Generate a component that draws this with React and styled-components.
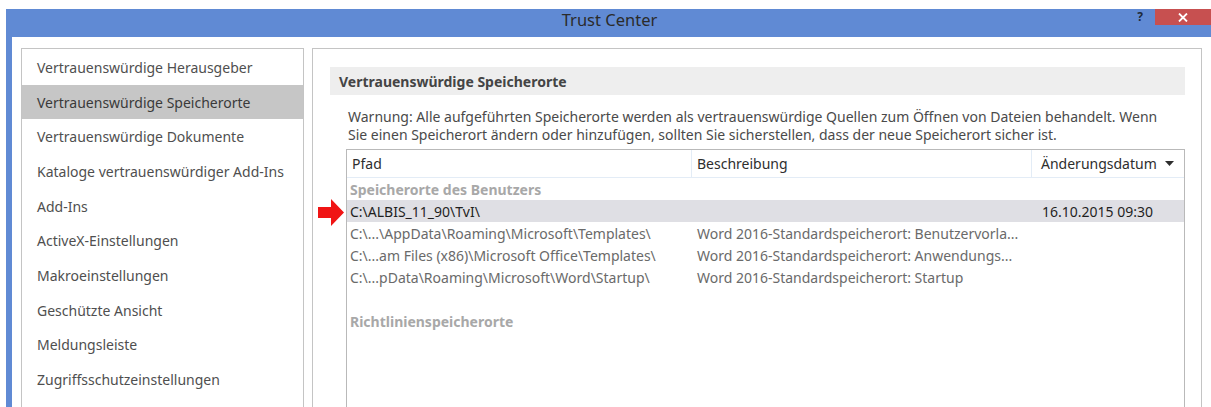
import React from 'react';
import styled, { createGlobalStyle } from 'styled-components';

const GlobalStyle = createGlobalStyle`
  html, body {
    margin: 0;
    padding: 0;
    background: #ffffff;
    overflow: hidden;
  }
  body {
    font-family: 'Noto Sans', 'Liberation Sans', sans-serif;
    font-size: 14px;
    color: #444;
  }
`;

const Window = styled.div`
  margin: 9px 0 0 6px;
  height: 398px;
  background: #608ad4;
  display: flex;
  flex-direction: column;
  overflow: hidden;
`;

const TitleBar = styled.div`
  height: 28px;
  flex-shrink: 0;
  position: relative;
  display: flex;
  align-items: center;
  justify-content: center;
`;

const Title = styled.div`
  font-size: 16.5px;
  color: #2b2b2b;
  margin-top: -8px;
  margin-left: 2px;
`;

const WindowButtons = styled.div`
  position: absolute;
  top: 0;
  right: 0;
  display: flex;
  align-items: flex-start;
`;

const HelpButton = styled.div`
  width: 30px;
  height: 16px;
  font-size: 12px;
  font-weight: 700;
  color: #1e2a3a;
  display: flex;
  align-items: center;
  justify-content: center;
  line-height: 1;
`;

const CloseButton = styled.div`
  width: 56px;
  height: 16px;
  background: #c75050;
  display: flex;
  align-items: center;
  justify-content: center;
`;

const Body = styled.div`
  flex: 1;
  background: #ffffff;
  margin-left: 6px;
  padding: 11px 0 0 9px;
  display: flex;
  gap: 8px;
  min-height: 0;
`;

const NavPanel = styled.ul`
  list-style: none;
  margin: 0;
  padding: 1px 0 0;
  width: 281px;
  flex-shrink: 0;
  border: 1px solid #c4c4c4;
  border-bottom: none;
`;

const NavItem = styled.li`
  height: 34.7px;
  display: flex;
  align-items: center;
  padding-left: 15px;
  color: ${p => (p.$active ? '#3a3a3a' : '#4f4f4f')};
  background: ${p => (p.$active ? '#c6c6c6' : 'transparent')};
  white-space: nowrap;
`;

const ContentPanel = styled.div`
  width: 890px;
  flex-shrink: 0;
  border: 1px solid #c4c4c4;
  border-bottom: none;
  padding: 18px 16px 0 17px;
  display: flex;
  flex-direction: column;
  box-sizing: border-box;
`;

const SectionHeader = styled.div`
  height: 28px;
  background: #eeeeee;
  display: flex;
  align-items: center;
  padding-left: 9px;
  font-weight: 700;
  color: #444;
`;

const Warning = styled.p`
  margin: 13px 22px 6px 18px;
  line-height: 17.5px;
  color: #4a4a4a;
`;

const TableWrap = styled.div`
  position: relative;
  margin-left: 16px;
  flex: 1;
  border: 1px solid #b9b9b9;
  border-bottom: none;
`;

const Grid = styled.div`
  display: grid;
  grid-template-columns: 345px 340px 1fr;
`;

const HeaderCell = styled.div`
  height: 27px;
  display: flex;
  align-items: center;
  padding-left: ${p => p.$pad || 5}px;
  color: #2e2e2e;
  border-bottom: 1px solid #e3ecf6;
  border-right: ${p => (p.$last ? 'none' : '1px solid #e3ecf6')};
  gap: 8px;
`;

const GroupRow = styled.div`
  grid-column: 1 / -1;
  height: 22px;
  display: flex;
  align-items: center;
  padding-left: 3px;
  font-weight: 700;
  color: #a8a8a8;
`;

const Spacer = styled.div`
  grid-column: 1 / -1;
  height: 22px;
`;

const Cell = styled.div`
  height: 22px;
  display: flex;
  align-items: center;
  padding-left: ${p => p.$pad}px;
  white-space: nowrap;
  overflow: hidden;
  color: ${p => (p.$selected ? '#1f1f1f' : '#6a6a6a')};
  background: ${p => (p.$selected ? '#dfdfe4' : 'transparent')};
`;

const Pointer = styled.svg`
  position: absolute;
  left: -29px;
  top: 49px;
`;

const columns = [
  { label: 'Pfad', pad: 5 },
  { label: 'Beschreibung', pad: 5 },
  { label: 'Änderungsdatum', pad: 9, sort: true },
];

const userLocations = [
  { path: 'C:\\ALBIS_11_90\\TvI\\', desc: '', date: '16.10.2015 09:30', selected: true },
  {
    path: 'C:\\...\\AppData\\Roaming\\Microsoft\\Templates\\',
    desc: 'Word 2016-Standardspeicherort: Benutzervorla...',
    date: '',
  },
  {
    path: 'C:\\...am Files (x86)\\Microsoft Office\\Templates\\',
    desc: 'Word 2016-Standardspeicherort: Anwendungs...',
    date: '',
  },
  {
    path: 'C:\\...pData\\Roaming\\Microsoft\\Word\\Startup\\',
    desc: 'Word 2016-Standardspeicherort: Startup',
    date: '',
  },
];

const navItems = [
  'Vertrauenswürdige Herausgeber',
  'Vertrauenswürdige Speicherorte',
  'Vertrauenswürdige Dokumente',
  'Kataloge vertrauenswürdiger Add-Ins',
  'Add-Ins',
  'ActiveX-Einstellungen',
  'Makroeinstellungen',
  'Geschützte Ansicht',
  'Meldungsleiste',
  'Zugriffsschutzeinstellungen',
];

const SortArrow = () => (
  <svg width="9" height="5" viewBox="0 0 9 5">
    <path d="M0 0h9L4.5 5z" fill="#2e2e2e" />
  </svg>
);

const CloseGlyph = () => (
  <svg width="10" height="9" viewBox="0 0 10 9">
    <path d="M1 0.5l8 8M9 0.5l-8 8" stroke="#fff" strokeWidth="1.8" />
  </svg>
);

export default function App() {
  return (
    <>
      <GlobalStyle />
      <Window>
        <TitleBar>
          <Title>Trust Center</Title>
          <WindowButtons>
            <HelpButton>?</HelpButton>
            <CloseButton>
              <CloseGlyph />
            </CloseButton>
          </WindowButtons>
        </TitleBar>
        <Body>
          <NavPanel>
            {navItems.map((item, i) => (
              <NavItem key={item} $active={i === 1}>
                {item}
              </NavItem>
            ))}
          </NavPanel>
          <ContentPanel>
            <SectionHeader>Vertrauenswürdige Speicherorte</SectionHeader>
            <Warning>
              Warnung: Alle aufgeführten Speicherorte werden als vertrauenswürdige Quellen zum
              Öffnen von Dateien behandelt. Wenn Sie einen Speicherort ändern oder hinzufügen,
              sollten Sie sicherstellen, dass der neue Speicherort sicher ist.
            </Warning>
            <TableWrap>
              <Pointer width="27" height="27" viewBox="0 0 27 27">
                <path d="M0 8h13V0l13 13.5L13 27v-8H0z" fill="#f01414" />
              </Pointer>
              <Grid>
                {columns.map((c, i) => (
                  <HeaderCell key={c.label} $pad={c.pad} $last={i === columns.length - 1}>
                    {c.label}
                    {c.sort && <SortArrow />}
                  </HeaderCell>
                ))}
                <GroupRow>Speicherorte des Benutzers</GroupRow>
                {userLocations.map(row => (
                  <React.Fragment key={row.path}>
                    <Cell $pad={3} $selected={row.selected}>{row.path}</Cell>
                    <Cell $pad={5} $selected={row.selected}>{row.desc}</Cell>
                    <Cell $pad={10} $selected={row.selected}>{row.date}</Cell>
                  </React.Fragment>
                ))}
                <Spacer />
                <GroupRow>Richtlinienspeicherorte</GroupRow>
              </Grid>
            </TableWrap>
          </ContentPanel>
        </Body>
      </Window>
    </>
  );
}
